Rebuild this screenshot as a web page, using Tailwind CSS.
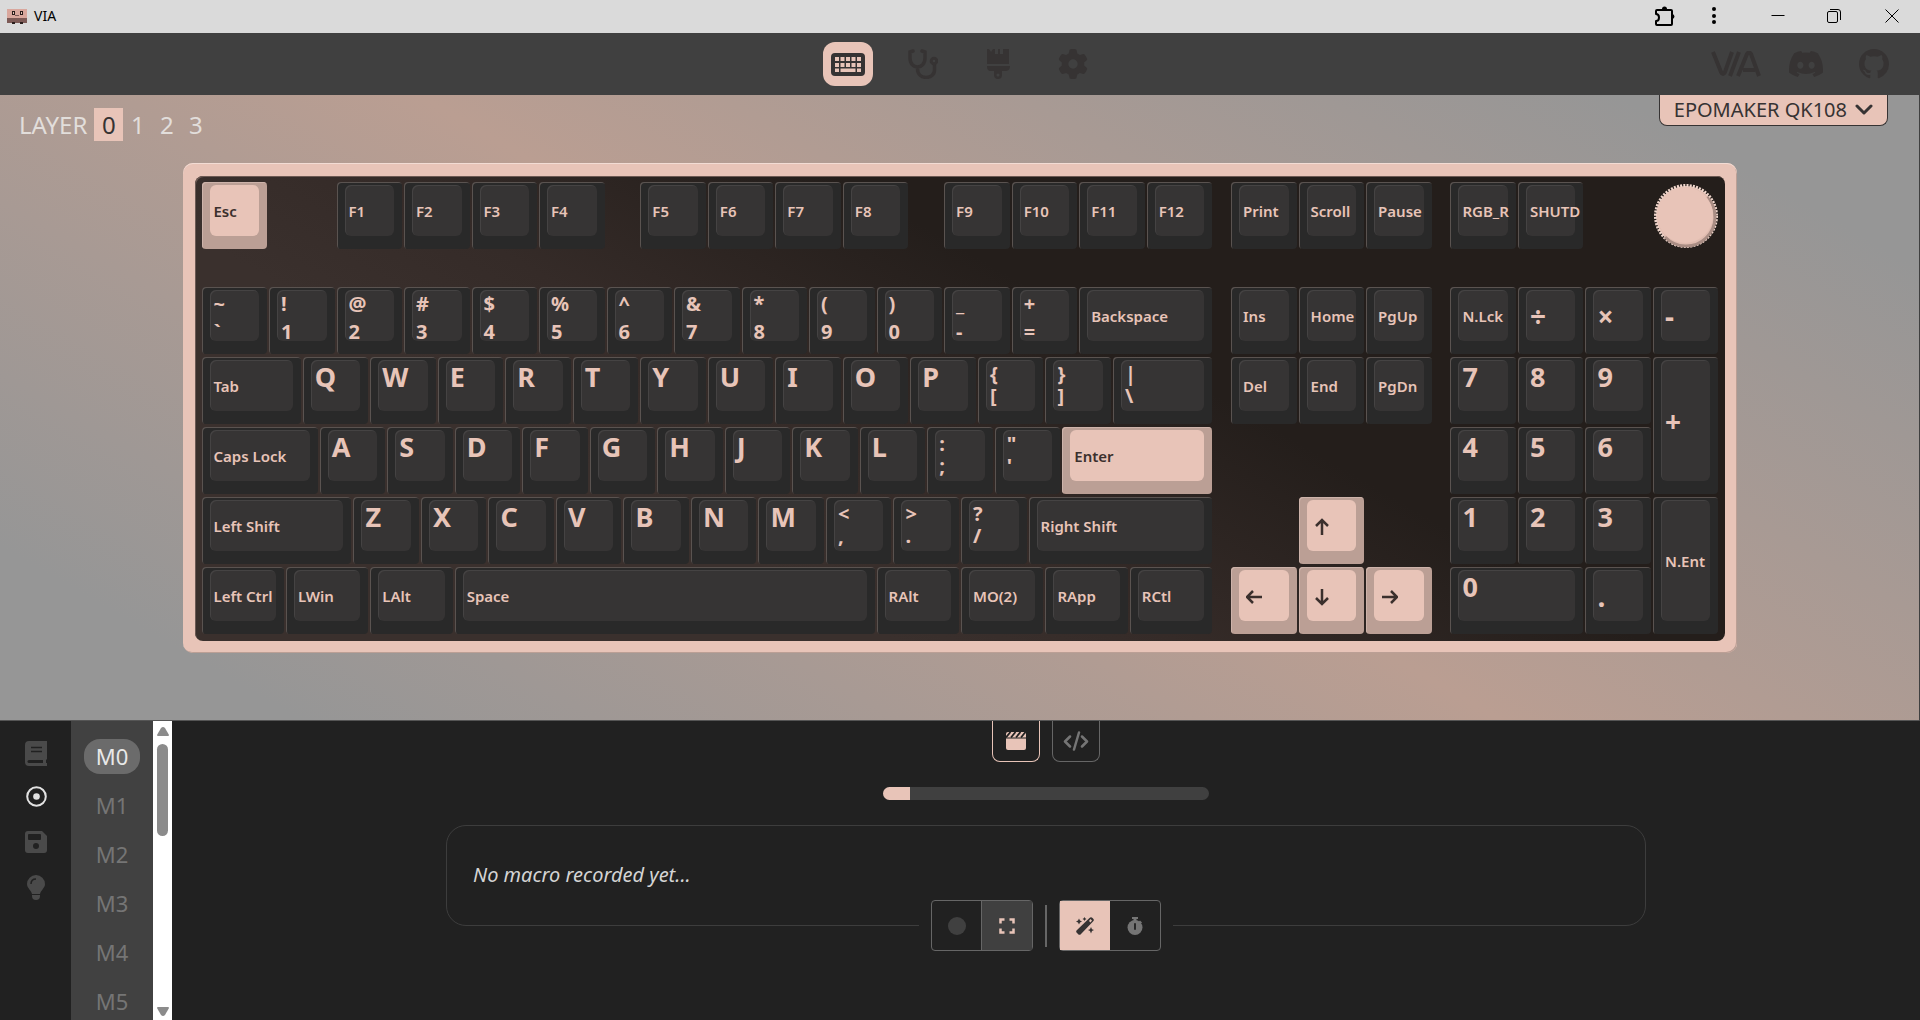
<!DOCTYPE html>
<html lang="en">
<head>
  <meta charset="UTF-8">
  <meta name="viewport" content="width=device-width, initial-scale=1.0">
  <title>VIA</title>
  <script src="https://cdn.jsdelivr.net/npm/@tailwindcss/browser@4"></script>
</head>
<body class="h-screen flex flex-col overflow-hidden bg-[#212121] font-['Noto_Sans','Open_Sans',sans-serif] text-[#e8c4b8]">

  <!-- Window title bar -->
  <div class="h-[33px] shrink-0 flex items-center bg-[#dadada] text-black pl-[7px] pr-[21px] pb-px">
    <svg class="w-5 h-4" viewBox="0 0 20 16">
      <path fill="#d9a79d" d="M0 1h20v9H0z"/>
      <path fill="#7d5a56" d="M0 10h20v5H0z"/>
      <path fill="#2a1d1b" d="M5 3h3v4H5zM13 3h3v4h-3zM5 14h3v2H5zM13 14h3v2h-3z"/>
      <path fill="#e8c4b8" d="M6 4h1v2H6zM14 4h1v2h-1z"/>
      <path stroke="#7d5a56" d="M8 7.500h4"/>
    </svg>
    <span class="ml-[7px] text-sm">VIA</span>
    <div class="ml-auto flex items-center">
      <button aria-label="Extensions">
        <svg class="w-[22px] h-[22px]" viewBox="0 0 22 22" fill="none" stroke="#000" stroke-width="2" stroke-linejoin="round"><path d="M3 5h14a1 1 0 0 1 1 1v13a1 1 0 0 1-1 1H3a1 1 0 0 1-1-1v-3c4 0 4-7 0-7V6a1 1 0 0 1 1-1z"/><path fill="#000" stroke="none" d="M8 4a2.500 2.500 0 0 1 5 0zM18 9a2.500 2.500 0 0 1 0 5z"/></svg>
      </button>
      <button class="ml-8" aria-label="Menu">
        <svg class="w-3 h-5" viewBox="0 0 12 20"><circle cx="6" cy="3" r="2"/><circle cx="6" cy="10" r="2"/><circle cx="6" cy="16" r="2"/></svg>
      </button>
      <button class="ml-[51px]" aria-label="Minimize">
        <svg class="w-[14px] h-[14px]" viewBox="0 0 14 14" stroke="#000"><path d="M0.500 6.500h13"/></svg>
      </button>
      <button class="ml-[42px]" aria-label="Restore">
        <svg class="w-[14px] h-[14px]" viewBox="0 0 14 14" fill="none" stroke="#000"><rect x="0.500" y="2.500" width="10" height="11" rx="1.500"/><path d="M3 .5h8a2.500 2.500 0 0 1 2.500 2.500v8"/></svg>
      </button>
      <button class="ml-[44px]" aria-label="Close">
        <svg class="w-[14px] h-[14px]" viewBox="0 0 14 14" stroke="#000"><path d="M.5.5l13 13M13.500.5l-13 13"/></svg>
      </button>
    </div>
  </div>

  <!-- Main navigation -->
  <header class="h-[62px] shrink-0 grid grid-cols-3 items-center bg-[#404040] text-[#363333]">
    <div></div>
    <nav class="flex justify-center gap-[25px]">
      <button class="w-[50px] h-11 grid place-items-center rounded-xl bg-[#e8c4b8] text-[#363333]" aria-label="Configure">
        <svg class="w-[34px] h-[23px]" viewBox="0 0 34 23">
          <rect width="34" height="23" rx="4" fill="currentColor"/>
          <path fill="#e8c4b8" d="M4 4h4v4H4zM9.500 4h4v4h-4zM15 4h4v4h-4zM20.500 4h4v4h-4zM26 4h4v4h-4zM4 10h4v4H4zM9.500 10h4v4h-4zM15 10h4v4h-4zM20.500 10h4v4h-4zM26 10h4v4h-4zM4 15.500h4v3.500H4zM9.500 15.500h15v3.500h-15zM26 15.500h4v3.500h-4z"/>
        </svg>
      </button>
      <button class="w-[50px] h-11 grid place-items-center" aria-label="Test">
        <svg class="w-[31px] h-[30px]" viewBox="0 0 31 30" fill="none" stroke="currentColor" stroke-width="3.500" stroke-linecap="round">
          <path d="M6 2L3 3v6c0 12 15 12 15 0V3l-3-1M10.500 18v2c0 11 17 11 17 1v-5"/><circle cx="27" cy="12" r="2.800" stroke-width="3"/>
        </svg>
      </button>
      <button class="w-[50px] h-11 grid place-items-center" aria-label="Design">
        <svg class="w-6 h-[30px]" viewBox="0 0 24 30" fill="currentColor"><path d="M3 0l2 3 2-3h2v5h3V0h2v5h3V0h6v15H1V0zM1 17h23c0 4-2 5-5 5h-3v4a4 4 0 0 1-8 0v-4H5c-3 0-4-2-4-5z"/><circle cx="12" cy="26" r="1.500" fill="#404040"/></svg>
      </button>
      <button class="w-[50px] h-11 grid place-items-center" aria-label="Settings">
        <svg class="w-[30px] h-[30px]" viewBox="0 0 512 512" fill="currentColor"><path d="M495.9 166.6c3.2 8.7 .5 18.4-6.4 24.6l-43.3 39.4c1.1 8.3 1.7 16.8 1.7 25.4s-.6 17.1-1.7 25.4l43.3 39.4c6.9 6.2 9.6 15.9 6.4 24.6c-4.4 11.9-9.7 23.300-15.8 34.3l-4.700 8.100c-6.600 11-14 21.400-22.100 31.200c-5.900 7.200-15.700 9.600-24.500 6.800l-55.700-17.700c-13.400 10.300-28.200 18.900-44 25.400l-12.500 57.100c-2 9.100-9 16.300-18.200 17.800c-13.800 2.300-28 3.500-42.500 3.500s-28.700-1.200-42.500-3.500c-9.200-1.500-16.200-8.700-18.200-17.800l-12.500-57.100c-15.800-6.500-30.600-15.100-44-25.400L83.100 425.900c-8.800 2.800-18.600 .3-24.500-6.800c-8.100-9.800-15.500-20.200-22.100-31.200l-4.700-8.100c-6.100-11-11.400-22.400-15.800-34.300c-3.200-8.700-.5-18.400 6.400-24.600l43.300-39.400C64.600 273.100 64 264.600 64 256s.6-17.100 1.700-25.400L22.400 191.200c-6.900-6.200-9.600-15.900-6.400-24.600c4.400-11.900 9.700-23.300 15.800-34.300l4.700-8.100c6.600-11 14-21.400 22.100-31.200c5.900-7.200 15.700-9.600 24.500-6.800l55.700 17.700c13.400-10.300 28.200-18.900 44-25.400l12.500-57.100c2-9.100 9-16.300 18.200-17.800C227.300 1.200 241.500 0 256 0s28.700 1.200 42.500 3.500c9.200 1.500 16.200 8.700 18.200 17.800l12.500 57.100c15.800 6.500 30.600 15.100 44 25.400l55.700-17.700c8.800-2.800 18.600-.3 24.500 6.800c8.100 9.800 15.500 20.200 22.100 31.200l4.700 8.100c6.100 11 11.400 22.400 15.800 34.300zM256 336a80 80 0 1 0 0-160 80 80 0 1 0 0 160z"/></svg>
      </button>
    </nav>
    <div class="flex justify-end items-center gap-7 pr-[31px]">
      <a href="#" aria-label="VIA">
        <svg class="w-[50px] h-[26px]" viewBox="0 0 50 26" fill="none" stroke="currentColor" stroke-width="4"><path d="M2 1l8 20q2 4 4 0l7-20M28 1l-9 24M27 25l9-22q2-3 4 0l8 22M32 19h12"/></svg>
      </a>
      <a href="#" aria-label="Discord">
        <svg class="w-[34px] h-[34px]" viewBox="0 0 24 24" fill="currentColor"><path d="M20.317 4.370a19.791 19.791 0 0 0-4.885-1.515.074.074 0 0 0-.079.037c-.211.375-.445.865-.608 1.250a18.270 18.270 0 0 0-5.487 0 12.640 12.640 0 0 0-.617-1.250.077.077 0 0 0-.079-.037A19.736 19.736 0 0 0 3.677 4.370a.070.070 0 0 0-.032.028C.533 9.046-.320 13.580.099 18.058a.082.082 0 0 0 .031.057 19.900 19.900 0 0 0 5.993 3.030.078.078 0 0 0 .084-.028c.462-.630.874-1.295 1.226-1.994a.076.076 0 0 0-.041-.106 13.107 13.107 0 0 1-1.872-.892.077.077 0 0 1-.008-.128c.126-.094.252-.192.372-.291a.074.074 0 0 1 .078-.011c3.928 1.793 8.180 1.793 12.062 0a.074.074 0 0 1 .078.010c.120.099.246.198.373.292a.077.077 0 0 1-.006.128 12.299 12.299 0 0 1-1.873.891.077.077 0 0 0-.041.107c.360.698.772 1.363 1.225 1.993a.076.076 0 0 0 .084.029 19.839 19.839 0 0 0 6.002-3.030.077.077 0 0 0 .032-.055c.500-5.177-.838-9.674-3.549-13.660a.061.061 0 0 0-.031-.029zM8.020 15.331c-1.183 0-2.157-1.086-2.157-2.419s.955-2.419 2.157-2.419c1.210 0 2.175 1.095 2.157 2.419 0 1.333-.956 2.419-2.157 2.419zm7.975 0c-1.183 0-2.157-1.086-2.157-2.419s.955-2.419 2.157-2.419c1.210 0 2.175 1.095 2.157 2.419 0 1.333-.946 2.419-2.157 2.419z"/></svg>
      </a>
      <a href="#" class="ml-2" aria-label="GitHub">
        <svg class="w-[30px] h-[30px]" viewBox="0 0 16 16" fill="currentColor"><path d="M8 0C3.580 0 0 3.580 0 8c0 3.540 2.290 6.530 5.470 7.590.4.070.550-.170.550-.380 0-.190-.010-.820-.010-1.490-2.010.370-2.530-.490-2.690-.940-.090-.230-.480-.940-.820-1.130-.280-.150-.680-.520-.010-.530.630-.010 1.080.580 1.230.820.720 1.210 1.870.870 2.330.660.070-.520.280-.870.510-1.070-1.780-.200-3.640-.890-3.640-3.950 0-.870.310-1.590.820-2.150-.080-.200-.360-1.020.080-2.120 0 0 .670-.210 2.200.820.640-.180 1.320-.270 2-.270s1.360.090 2 .270c1.530-1.040 2.200-.820 2.200-.820.440 1.100.160 1.920.080 2.120.510.560.820 1.270.820 2.150 0 3.070-1.870 3.750-3.650 3.950.290.250.540.730.540 1.480 0 1.070-.010 1.930-.010 2.200 0 .210.150.460.550.380A8.010 8.010 0 0 0 16 8c0-4.420-3.580-8-8-8z"/></svg>
      </a>
    </div>
  </header>

  <!-- Keyboard preview -->
  <section class="shrink-0 pb-[67px] border-b border-r border-b-[#555] border-r-[#404040] bg-[linear-gradient(30deg,#969696_10%,#ba9e92_50%,#969696_90%)]">
    <div class="flex items-start justify-between pl-[19px] pr-[31px]">
      <div class="flex items-center pt-[13px] text-2xl leading-[31px] text-[#e2dedb]">
        <span>LAYER</span>
        <div id="layers" class="flex ml-[7px]"></div>
      </div>
      <button class="h-[31px] px-[14px] flex items-center gap-2 rounded-b-lg border border-t-0 border-[#363333] bg-[#e8c4b8] text-[#363333] text-xl">
        EPOMAKER QK108
        <svg class="w-[18px] h-3" viewBox="0 0 18 12" fill="none" stroke="currentColor" stroke-width="3" stroke-linecap="round" stroke-linejoin="round"><path d="M2 2l7 7 7-7"/></svg>
      </button>
    </div>

    <div class="mt-[22px] mx-auto w-full max-w-[1554px] px-3 pt-[13px] pb-3 rounded-[10px] bg-[#e8c4b8] shadow-[inset_0_1px_0_#f2dcd4,inset_-1px_-1px_0_#bb9f95]">
      <div id="board" class="grid grid-cols-[repeat(90,minmax(0,1fr))] grid-rows-[67px_32px_repeat(5,67px)] gap-y-[3px] pt-[6px] pb-[7px] pl-[7px] pr-[4px] rounded-lg bg-[linear-gradient(30deg,#3a302d_30%,#352b28_42%,#241e1b_62%)] shadow-[inset_1px_1px_0_#6d5a54]"></div>
    </div>
  </section>

  <!-- Configuration panes -->
  <div class="flex-1 min-h-0 flex">
    <nav class="w-[71px] shrink-0 flex flex-col items-center pt-5 pl-px text-[#4a4a4a]">
      <button class="h-[25px]" aria-label="Keymap">
        <svg class="w-[22px] h-[25px]" viewBox="0 0 22 25"><path fill="currentColor" d="M4 0h18v18l-1 1v3h1v3H4a4 4 0 0 1-4-4V4a4 4 0 0 1 4-4z"/><path stroke="#212121" d="M6 6.500h11M6 10.500h11" stroke-width="1.500"/><path fill="#212121" d="M4 19h14v3H4a1.500 1.500 0 0 1 0-3z"/></svg>
      </button>
      <button class="mt-5 h-[21px] text-[#e2e2e2]" aria-label="Macros">
        <svg class="w-[21px] h-[21px]" viewBox="0 0 21 21"><circle cx="10.500" cy="10.500" r="9.300" fill="none" stroke="currentColor" stroke-width="2"/><circle cx="10.500" cy="10.500" r="3.300" fill="currentColor"/></svg>
      </button>
      <button class="mt-6 h-[22px]" aria-label="Save and load">
        <svg class="w-[22px] h-[22px]" viewBox="0 0 22 22"><path fill="currentColor" d="M3 0h14l5 5v14a3 3 0 0 1-3 3H3a3 3 0 0 1-3-3V3a3 3 0 0 1 3-3z"/><rect x="3" y="3" width="13" height="6" rx="1" fill="#212121"/><circle cx="11" cy="15" r="3" fill="#212121"/></svg>
      </button>
      <button class="mt-[22px] h-[25px]" aria-label="Lighting">
        <svg class="w-[18px] h-[25px]" viewBox="0 0 18 25"><path fill="currentColor" d="M9 0a9 9 0 0 1 9 9c0 4-4 6-5 10H5C4 15 0 13 0 9a9 9 0 0 1 9-9zM5 20h8v1a4 4 0 0 1-8 0z"/><path fill="none" stroke="#212121" stroke-width="1.500" d="M4 9c0-3 2-5 5-5"/></svg>
      </button>
    </nav>

    <div id="macros" class="w-[82px] shrink-0 flex flex-col items-center gap-[14px] pt-[18px] overflow-hidden bg-[#414141] text-[22px] text-[#757575]"></div>

    <div class="w-[19px] shrink-0 flex flex-col items-center bg-white pt-[6px] pb-1">
      <svg class="w-3 h-[9px]" viewBox="0 0 12 9" fill="#8b8b8b"><path d="M6 0q1 0 2 1l4 7q0 1-1 1H1q-1 0-1-1l4-7q1-1 2-1z"/></svg>
      <div class="mt-2 w-[11px] h-[92px] rounded-full bg-[#8b8b8b]"></div>
      <svg class="mt-auto w-3 h-[9px]" viewBox="0 0 12 9" fill="#8b8b8b"><path d="M6 9q1 0 2-1l4-7q0-1-1-1H1Q0 0 0 1l4 7q1 1 2 1z"/></svg>
    </div>

    <main class="flex-1 min-w-0 flex flex-col items-center overflow-hidden px-8">
      <div class="flex gap-3">
        <button class="w-12 h-[41px] grid place-items-center rounded-b-lg border border-t-0 border-[#e8c4b8]" aria-label="Macro recorder">
          <svg class="w-5 h-[18px]" viewBox="0 0 20 18"><path fill="currentColor" d="M2 0h16a2 2 0 0 1 2 2v14a2 2 0 0 1-2 2H2a2 2 0 0 1-2-2V2a2 2 0 0 1 2-2z"/><path stroke="#212121" stroke-width="1.800" d="M0 5.500L4.500 0M5 5.500L9.500 0M10 5.500L14.500 0M15 5.500L19.500 0"/><path stroke="#212121" stroke-width="1" d="M0 6h20"/></svg>
        </button>
        <button class="w-12 h-[41px] grid place-items-center rounded-b-lg border border-t-0 border-[#666] text-[#757575]" aria-label="Macro script">
          <svg class="w-[26px] h-5" viewBox="0 0 26 20" fill="none" stroke="currentColor" stroke-width="2.500" stroke-linecap="round" stroke-linejoin="round"><path d="M7 5.500L2 10.500l5 5M19 5.500l5 5-5 5M16 1.500l-5 17"/></svg>
        </button>
      </div>

      <div class="mt-[25px] w-[326px] h-[13px] rounded-full overflow-hidden bg-[#404040]">
        <div class="w-[27px] h-full bg-[#e8c4b8]"></div>
      </div>

      <div class="mt-[25px] w-full max-w-[1200px] h-[101px] px-[26px] pb-px flex items-center border border-[#3d3d3d] rounded-[20px] text-[#d4d4d4] text-xl italic">No macro recorded yet...</div>

      <div class="-mt-[26px] z-10 flex items-center gap-3 px-3 bg-[#212121]">
        <div class="flex w-[102px] h-[51px] border border-[#666] rounded-sm">
          <button class="w-[50px] grid place-items-center border-r border-[#666] text-[#404040]" aria-label="Record">
            <svg class="w-[18px] h-[18px]" viewBox="0 0 18 18"><circle cx="9" cy="9" r="9" fill="currentColor"/></svg>
          </button>
          <button class="flex-1 grid place-items-center bg-[#404040]" aria-label="Full screen">
            <svg class="w-4 h-4" viewBox="0 0 16 16" fill="none" stroke="currentColor" stroke-width="2.500"><path d="M1.500 5.500v-4h4M10.500 1.500h4v4M14.500 10.500v4h-4M5.500 14.500h-4v-4"/></svg>
          </button>
        </div>
        <div class="w-[2px] h-[42px] bg-[#666]"></div>
        <div class="flex w-[102px] h-[51px] border border-[#666] rounded-sm">
          <button class="w-[50px] grid place-items-center bg-[#e8c4b8] text-[#363333]" aria-label="Smart optimize">
            <svg class="w-[18px] h-[18px]" viewBox="0 0 18 18" fill="currentColor"><path d="M13.500 1a2 2 0 0 1 3 0l.5.5a2 2 0 0 1 0 3L5 17a2 2 0 0 1-3 0l-1-1a2 2 0 0 1 0-3zM13 4l1.500 1.500L16 3.500 14.500 2z" fill-rule="evenodd"/><path d="M3 1.500l1 2 2 1-2 1-1 2-1-2-2-1 2-1zM8.500 0l.7 1.300 1.300.7-1.300.7L8.500 4l-.7-1.300L6.500 2l1.300-.7zM15 10l1 2.200 2 .8-2 1-1 2.500-1-2.500-2-1 2-.8z"/></svg>
          </button>
          <button class="flex-1 grid place-items-center text-[#757575]" aria-label="Record delays">
            <svg class="w-4 h-[18px]" viewBox="0 0 16 18"><path fill="currentColor" d="M5 0h6v2H9.500v2h-3V2H5zM13 3.500L15 5.500l-1.500 1.500-2-2z"/><circle cx="8" cy="10.500" r="7.500" fill="currentColor"/><path stroke="#212121" stroke-width="1.800" stroke-linecap="round" d="M8 7v5"/></svg>
          </button>
        </div>
      </div>
    </main>
  </div>

  <script>
    // [label, x, row, width, height, accent], x and width in key units
    // "a b" puts the shifted legend above the plain one
    const keys = [
      ['Esc', 0, 1, 1, 1, true],
      ['F1', 2, 1], ['F2', 3, 1], ['F3', 4, 1], ['F4', 5, 1],
      ['F5', 6.5, 1], ['F6', 7.5, 1], ['F7', 8.5, 1], ['F8', 9.5, 1],
      ['F9', 11, 1], ['F10', 12, 1], ['F11', 13, 1], ['F12', 14, 1],
      ['Print', 15.25, 1], ['Scroll', 16.25, 1], ['Pause', 17.25, 1],
      ['RGB_R', 18.5, 1], ['SHUTD', 19.5, 1],

      ['~ `', 0, 3], ['! 1', 1, 3], ['@ 2', 2, 3], ['# 3', 3, 3], ['$ 4', 4, 3], ['% 5', 5, 3], ['^ 6', 6, 3],
      ['& 7', 7, 3], ['* 8', 8, 3], ['( 9', 9, 3], [') 0', 10, 3], ['_ -', 11, 3], ['+ =', 12, 3], ['Backspace', 13, 3, 2],
      ['Ins', 15.25, 3], ['Home', 16.25, 3], ['PgUp', 17.25, 3],
      ['N.Lck', 18.5, 3], ['÷', 19.5, 3], ['×', 20.5, 3], ['-', 21.5, 3],

      ['Tab', 0, 4, 1.5], ['Q', 1.5, 4], ['W', 2.5, 4], ['E', 3.5, 4], ['R', 4.5, 4], ['T', 5.5, 4], ['Y', 6.5, 4],
      ['U', 7.5, 4], ['I', 8.5, 4], ['O', 9.5, 4], ['P', 10.5, 4], ['{ [', 11.5, 4], ['} ]', 12.5, 4], ['| \\', 13.5, 4, 1.5],
      ['Del', 15.25, 4], ['End', 16.25, 4], ['PgDn', 17.25, 4],
      ['7', 18.5, 4], ['8', 19.5, 4], ['9', 20.5, 4], ['+', 21.5, 4, 1, 2],

      ['Caps Lock', 0, 5, 1.75], ['A', 1.75, 5], ['S', 2.75, 5], ['D', 3.75, 5], ['F', 4.75, 5], ['G', 5.75, 5], ['H', 6.75, 5],
      ['J', 7.75, 5], ['K', 8.75, 5], ['L', 9.75, 5], [': ;', 10.75, 5], ['" \'', 11.75, 5], ['Enter', 12.75, 5, 2.25, 1, true],
      ['4', 18.5, 5], ['5', 19.5, 5], ['6', 20.5, 5],

      ['Left Shift', 0, 6, 2.25], ['Z', 2.25, 6], ['X', 3.25, 6], ['C', 4.25, 6], ['V', 5.25, 6], ['B', 6.25, 6], ['N', 7.25, 6],
      ['M', 8.25, 6], ['< ,', 9.25, 6], ['> .', 10.25, 6], ['? /', 11.25, 6], ['Right Shift', 12.25, 6, 2.75],
      ['↑', 16.25, 6, 1, 1, true],
      ['1', 18.5, 6], ['2', 19.5, 6], ['3', 20.5, 6], ['N.Ent', 21.5, 6, 1, 2],

      ['Left Ctrl', 0, 7, 1.25], ['LWin', 1.25, 7, 1.25], ['LAlt', 2.5, 7, 1.25], ['Space', 3.75, 7, 6.25],
      ['RAlt', 10, 7, 1.25], ['MO(2)', 11.25, 7, 1.25], ['RApp', 12.5, 7, 1.25], ['RCtl', 13.75, 7, 1.25],
      ['←', 15.25, 7, 1, 1, true], ['↓', 16.25, 7, 1, 1, true], ['→', 17.25, 7, 1, 1, true],
      ['0', 18.5, 7, 2], ['.', 20.5, 7]
    ];

    const arrows = {
      '↑': 'M8 17V2M2 8l6-6 6 6',
      '↓': 'M8 1v15M2 10l6 6 6-6',
      '←': 'M16 9H1M7 3L1 9l6 6',
      '→': 'M1 9h15M10 3l6 6-6 6'
    };

    function legend(label, row) {
      if (arrows[label]) {
        return `<svg class="ml-[3px] mt-[2px] w-[17px] h-[18px]" viewBox="0 0 17 18" fill="none" stroke="currentColor" stroke-width="2.5" aria-label="${label}"><path d="${arrows[label]}"/></svg>`;
      }
      if (label.length === 3 && label[1] === ' ') {
        const lead = row === 3 ? 'leading-[28px]' : 'leading-[22px] pt-[3px]';
        const esc = (c) => c.replace('&', '&amp;').replace('<', '&lt;');
        return `<span class="self-start block text-xl font-bold ${lead}">${esc(label[0])}<br>${esc(label[2])}</span>`;
      }
      if (/^[A-Z0-9]$/.test(label)) {
        return `<span class="self-start text-[27px] leading-[34px] font-bold">${label}</span>`;
      }
      if (label.length === 1) {
        return `<span class="text-[28px] leading-[36px] font-bold">${label}</span>`;
      }
      return `<span class="pt-[2px] text-[15px] font-semibold whitespace-nowrap">${label}</span>`;
    }

    const board = document.getElementById('board');
    keys.forEach(([label, x, row, w = 1, h = 1, accent]) => {
      const key = document.createElement('button');
      key.className = 'flex mr-[2px] pl-2 pr-2 pt-[3px] pb-[13px] rounded text-left ' + (accent
        ? 'bg-[#bb9f95] text-[#3b302d] shadow-[inset_1px_1px_0_#cdb3aa]'
        : 'bg-[#292929] shadow-[inset_1px_1px_0_#5a5350]');
      key.style.gridColumn = `${x * 4 + 1} / span ${w * 4}`;
      key.style.gridRow = `${row} / span ${h}`;
      key.innerHTML = `<span class="flex-1 min-w-0 self-stretch h-full flex items-center pl-1 rounded-md ${accent
        ? 'bg-[#e8c4b8]'
        : 'bg-[#363434] shadow-[inset_1px_1px_0_#454343]'}">${legend(label, row)}</span>`;
      board.appendChild(key);
    });

    // Rotary encoder
    const knob = document.createElement('button');
    knob.className = 'mr-[2px] grid place-items-center';
    knob.setAttribute('aria-label', 'Encoder');
    knob.style.gridColumn = '87 / span 4';
    knob.style.gridRow = '1';
    knob.innerHTML = `<svg class="w-16 h-16" viewBox="0 0 64 64">
      <circle cx="32" cy="32" r="30" fill="#e0bcb0"/>
      <circle cx="32" cy="32" r="30.500" fill="none" stroke="#f0d6cc" stroke-width="3" stroke-dasharray="2 1.200"/>
      <path d="M53 13a29 29 0 0 1-42 40" fill="none" stroke="#a98d84" stroke-width="3"/>
      <circle cx="31" cy="31" r="28" fill="#e8c4b8"/></svg>`;
    board.appendChild(knob);

    document.getElementById('layers').innerHTML = [0, 1, 2, 3].map((n) =>
      `<button class="w-[29px] h-[33px] ${n === 0 ? 'bg-[#e8c4b8] text-[#363333]' : ''}">${n}</button>`).join('');

    document.getElementById('macros').innerHTML = Array.from({ length: 6 }, (_, n) =>
      `<button class="w-14 h-[35px] leading-[33px] shrink-0 rounded-2xl ${n === 0 ? 'bg-[#6b6b6b] text-[#e8e8e8]' : ''}">M${n}</button>`).join('');
  </script>
</body>
</html>
